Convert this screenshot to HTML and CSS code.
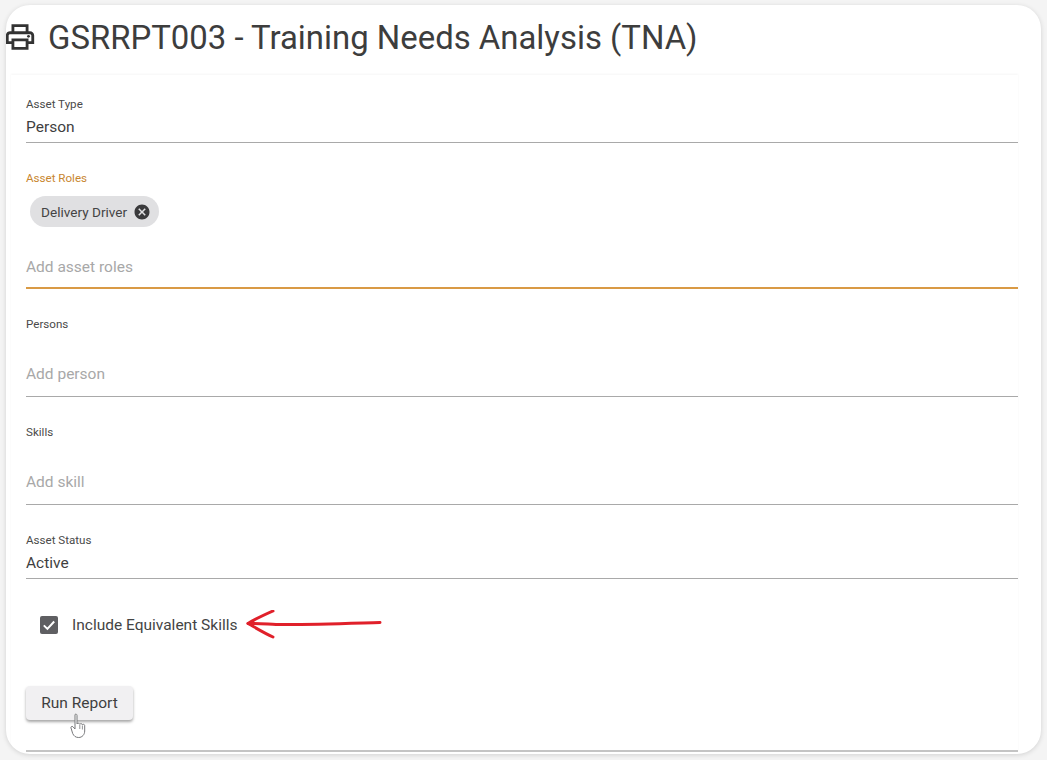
FILE: index.html
```html
<!DOCTYPE html>
<html>
<head>
    <meta charset="UTF-8">
    <title>GSRRPT003 - Training Needs Analysis (TNA)</title>
    <link rel="stylesheet" href="styles.css">
</head>
<body>
    <div class="frame">
        <!-- Page title -->
        <h1 class="title">
            <svg class="print-icon" viewBox="0 0 24 24" width="34" height="34">
                <path d="M19 8h-1V3H6v5H5c-1.66 0-3 1.34-3 3v6h4v4h12v-4h4v-6c0-1.66-1.34-3-3-3zM8 5h8v3H8V5zm8 14H8v-4h8v4zm2-4v-2H6v2H4v-4c0-.55.45-1 1-1h14c.55 0 1 .45 1 1v4h-2z"/>
                <circle cx="18" cy="11.5" r="1"/>
            </svg>
            GSRRPT003 - Training Needs Analysis (TNA)
        </h1>

        <!-- Report form -->
        <div class="card">
            <div class="field field-type">
                <div class="field-label">Asset Type</div>
                <div class="field-value">Person</div>
            </div>

            <div class="field field-roles">
                <div class="field-label focused">Asset Roles</div>
                <div class="chip">
                    Delivery Driver
                    <svg class="chip-x" viewBox="0 0 24 24" width="18" height="18">
                        <path d="M12 2C6.47 2 2 6.47 2 12s4.47 10 10 10 10-4.47 10-10S17.53 2 12 2zm5 13.59L15.59 17 12 13.41 8.41 17 7 15.59 10.59 12 7 8.41 8.41 7 12 10.59 15.59 7 17 8.41 13.41 12 17 15.59z"/>
                    </svg>
                </div>
                <div class="placeholder">Add asset roles</div>
            </div>

            <div class="field field-chips">
                <div class="field-label">Persons</div>
                <div class="placeholder">Add person</div>
            </div>

            <div class="field field-chips">
                <div class="field-label">Skills</div>
                <div class="placeholder">Add skill</div>
            </div>

            <div class="field field-status">
                <div class="field-label">Asset Status</div>
                <div class="field-value">Active</div>
            </div>

            <div class="check-row">
                <span class="checkbox">
                    <svg viewBox="0 0 18 18" width="18" height="18">
                        <path d="M3.8 9.4l3.6 3.5 6.8-7.4" fill="none" stroke="#fff" stroke-width="2"/>
                    </svg>
                </span>
                <span class="check-label">Include Equivalent Skills</span>
                <svg class="arrow" viewBox="0 0 136 30" width="136" height="30">
                    <path d="M134 12.5C100 13.5 60 15 30 14.5C20 14 10 13 2 13.5" fill="none" stroke="#e0202a" stroke-width="3" stroke-linecap="round"/>
                    <path d="M27 1C18 5 9 9 2 13.5C10 18 18 23 27 27" fill="none" stroke="#e0202a" stroke-width="3" stroke-linecap="round" stroke-linejoin="round"/>
                </svg>
            </div>

            <div class="run-wrap">
                <button class="run-btn">Run Report</button>
                <svg class="hand" viewBox="0 0 18 26" width="18" height="26">
                    <path d="M5 1.5c1-.8 2-.2 2 1V11c.2-1 2.6-1 2.8.3 .3-.9 2.4-.9 2.6.4 .4-.7 2.2-.5 2.3.8V18c0 3.5-2.5 6.5-6 6.5-3.2 0-4.8-1.5-6-4L1 15c-.5-1.3 1-2.3 2-1.2L5 16V2z" fill="#fff" stroke="#77787a" stroke-width="1"/>
                    <path d="M9.8 12v4M12.4 12.5v4" stroke="#77787a" stroke-width=".8"/>
                </svg>
            </div>

            <div class="bottom-line"></div>
        </div>
    </div>
</body>
</html>
```

FILE: styles.css
```css
html, body {
    margin: 0;
    height: 100%;
}
body {
    background-color: #f4f4f4;
    font-family: Roboto, 'Liberation Sans', sans-serif;
    color: #3f3f3f;
    overflow: hidden;
    padding: 5px 6px 6px 6px;
    box-sizing: border-box;
}
.frame {
    background-color: #fff;
    height: 749px;
    border-radius: 24px;
    box-shadow: 0 1px 5px rgba(0, 0, 0, 0.14);
    overflow: hidden;
    box-sizing: border-box;
}
.title {
    display: flex;
    align-items: center;
    gap: 11px;
    margin: 0;
    height: 70px;
    padding-bottom: 6px;
    box-sizing: border-box;
    font-size: 32.9px;
    font-weight: 400;
    color: #3d3d3d;
    white-space: nowrap;
}
.print-icon {
    fill: #333;
    flex: none;
    margin-left: -3px;
}
.card {
    margin: 0 23px 0 5px;
    padding: 0 0 0 15px;
    box-shadow: 0 -1px 2px rgba(0, 0, 0, 0.04);
}
.field {
    border-bottom: 1px solid #a9a9a9;
}
.field-label {
    font-size: 11.6px;
    line-height: 14px;
    color: #4a4a4a;
}
.field-label.focused {
    color: #c8862f;
}
.field-value {
    font-size: 15.5px;
    line-height: 20px;
    color: #3f3f3f;
}
.placeholder {
    font-size: 15.5px;
    line-height: 20px;
    color: #a8a8a8;
}
.field-type {
    padding-top: 22px;
    height: 68px;
    box-sizing: border-box;
}
.field-type .field-value {
    margin-top: 6px;
}
.field-roles {
    margin-top: 28px;
    height: 118px;
    box-sizing: border-box;
    border-bottom: 2px solid #d99a45;
}
.chip {
    display: inline-flex;
    align-items: center;
    gap: 6px;
    height: 31px;
    margin: 11px 0 0 4px;
    padding: 0 8px 0 11px;
    border-radius: 16px;
    background-color: #e0e0e2;
    font-size: 13.6px;
    color: #444;
}
.chip-x {
    fill: #3a3a3c;
}
.field-roles .placeholder {
    margin-top: 30px;
}
.field-chips {
    margin-top: 28px;
    height: 80px;
    box-sizing: border-box;
}
.field-chips .placeholder {
    margin-top: 33px;
}
.field-status {
    margin-top: 28px;
    height: 46px;
    box-sizing: border-box;
}
.field-status .field-value {
    margin-top: 6px;
}
.check-row {
    display: flex;
    align-items: center;
    height: 30px;
    margin-top: 31px;
    padding-left: 14px;
}
.checkbox {
    width: 18px;
    height: 18px;
    border-radius: 2px;
    background-color: #5f5f62;
    flex: none;
}
.check-label {
    font-size: 15.5px;
    margin-left: 14px;
    color: #444;
}
.arrow {
    margin-left: 9px;
    flex: none;
}
.run-wrap {
    position: relative;
    margin-top: 46px;
    height: 34px;
}
.run-btn {
    width: 107px;
    height: 34px;
    border: none;
    border-radius: 4px;
    background-color: #f1f0f2;
    box-shadow: 0 2px 3px rgba(0, 0, 0, 0.35);
    font-family: Roboto, 'Liberation Sans', sans-serif;
    font-size: 15.5px;
    color: #3f3f3f;
    padding: 0;
}
.hand {
    position: absolute;
    left: 44px;
    top: 27px;
}
.bottom-line {
    margin-top: 30px;
    border-top: 2px solid #c4c4c4;
}
```
